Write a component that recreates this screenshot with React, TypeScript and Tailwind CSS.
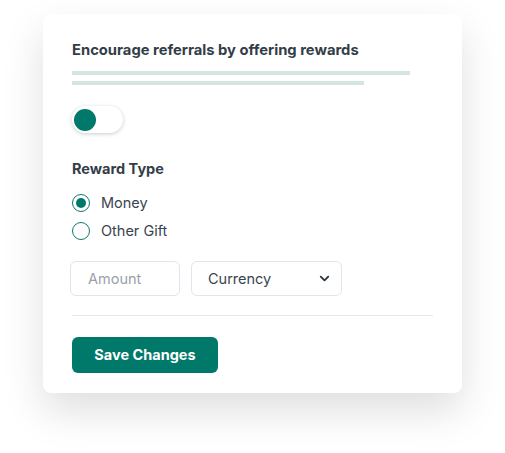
import React, { useState } from 'react';
import { ChevronDown } from 'lucide-react';

const font = { fontFamily: 'Inter, "Noto Sans", sans-serif' };

const Radio: React.FC<{ checked: boolean; label: string; onClick: () => void }> = ({ checked, label, onClick }) => (
  <button onClick={onClick} className="flex items-center gap-[11px] h-[18px]">
    <span className="flex h-[18px] w-[18px] items-center justify-center rounded-full border-[1.5px] border-[#0e7a6c]">
      {checked && <span className="h-[10px] w-[10px] rounded-full bg-[#00796a]" />}
    </span>
    <span className="text-[14.5px] text-[#3a4450]">{label}</span>
  </button>
);

export default function App() {
  const [enabled, setEnabled] = useState(false);
  const [reward, setReward] = useState('money');

  return (
    <div className="min-h-screen bg-white pt-[14px] pl-[43px]" style={font}>
      <div className="w-[419px] rounded-lg bg-white px-[29px] pt-[26px] pb-[20px] shadow-[0_18px_40px_rgba(0,0,0,0.13)]">
        <h2 className="text-[14.75px] font-bold leading-5 text-[#333d47]">Encourage referrals by offering rewards</h2>

        {/* placeholder description lines */}
        <div className="mt-[11px] flex flex-col gap-[6px]">
          <div className="h-[4px] w-[338px] bg-[#d5e5e2]" />
          <div className="h-[4px] w-[292px] bg-[#d5e5e2]" />
        </div>

        <button
          onClick={() => setEnabled(!enabled)}
          className="mt-[21px] flex h-[27px] w-[51px] items-center rounded-full bg-white px-[2px] shadow-[0_1px_4px_rgba(0,0,0,0.2)]"
        >
          <span className="h-[22px] w-[22px] rounded-full bg-[#00796a]" />
        </button>

        <h3 className="mt-[26px] text-[14.5px] font-bold leading-5 text-[#333d47]">Reward Type</h3>

        <div className="mt-[15px] flex flex-col gap-[10px]">
          <Radio checked={reward === 'money'} label="Money" onClick={() => setReward('money')} />
          <Radio checked={reward === 'gift'} label="Other Gift" onClick={() => setReward('gift')} />
        </div>

        <div className="mt-[21px] flex gap-[11px] -ml-[2px]">
          <input
            placeholder="Amount"
            className="h-[35px] w-[110px] rounded-md border border-[#e1e6eb] px-[17px] text-[14.5px] text-[#3a4450] placeholder:text-[#9aa1a8] outline-none"
          />
          <button className="flex h-[35px] w-[151px] items-center justify-between rounded-md border border-[#e1e6eb] pl-[16px] pr-[9px] text-[14.5px] text-[#3a4450]">
            Currency
            <ChevronDown size={15} strokeWidth={3} className="text-[#2d3640]" />
          </button>
        </div>

        <div className="mt-[19px] h-px bg-[#e3e8ee]" />

        <button className="mt-[21px] h-[36px] w-[146px] rounded-md bg-[#00796a] text-[14.5px] font-bold text-white">
          Save Changes
        </button>
      </div>
    </div>
  );
}
